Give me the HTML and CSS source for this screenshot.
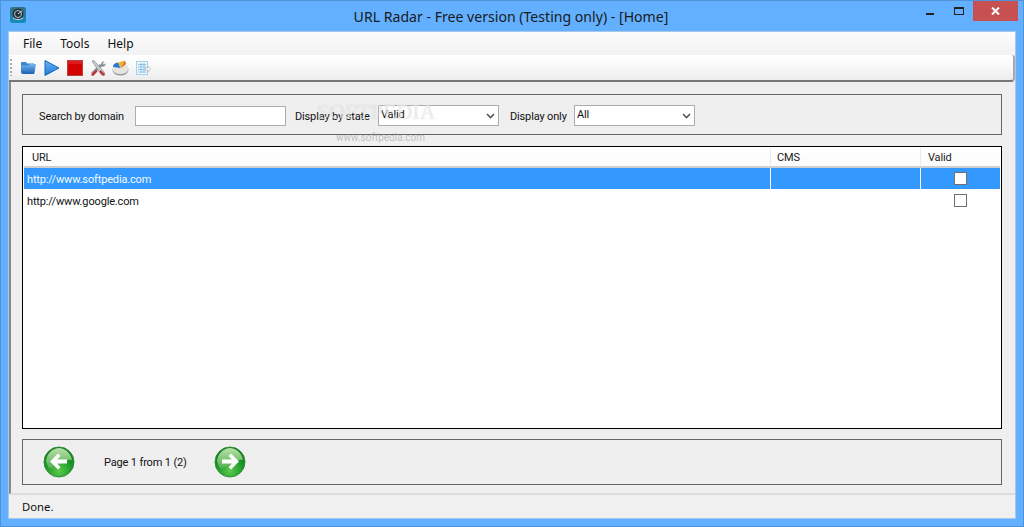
FILE: index.html
```html
<!DOCTYPE html>
<html lang="en">
<head>
<meta charset="utf-8">
<title>URL Radar</title>
<link rel="stylesheet" href="styles.css">
</head>
<body>
<div class="window">
  <header class="titlebar">
    <svg class="appicon" width="16" height="16" viewBox="0 0 16 16">
      <defs><linearGradient id="ai" x1="0" y1="0" x2="0" y2="1"><stop offset="0" stop-color="#3a6f80"/><stop offset="1" stop-color="#0f8fc0"/></linearGradient></defs>
      <rect width="16" height="16" rx="2.5" fill="url(#ai)"/>
      <circle cx="8" cy="7" r="5.5" fill="#22303a"/>
      <circle cx="8" cy="7" r="3.5" fill="none" stroke="#b8c4cc" stroke-width="1"/>
      <path d="M8 7l4-3M3 11c3 2 7 2 10 0" fill="none" stroke="#d8e0e4" stroke-width="1"/>
    </svg>
    <div class="title">URL Radar - Free version (Testing only) - [Home]</div>
    <div class="caption">
      <div class="cap-btn"><span class="min"></span></div>
      <div class="cap-btn"><span class="max"></span></div>
      <div class="cap-close">
        <svg width="9" height="8" viewBox="0 0 9 8"><path d="M1 .5l7 7M8 .5l-7 7" stroke="#fff" stroke-width="2"/></svg>
      </div>
    </div>
  </header>
  <div class="client">
    <nav class="menubar"><span>File</span><span>Tools</span><span>Help</span></nav>
    <div class="toolbar">
      <span class="grip"></span>
      <svg class="tool" width="17" height="16" viewBox="0 0 17 16">
        <defs><linearGradient id="fo" x1="0" y1="0" x2="0" y2="1"><stop offset="0" stop-color="#74b8f0"/><stop offset="1" stop-color="#1c5fb4"/></linearGradient></defs>
        <path d="M1 3q0-1 1-1h4l1 1.500h7v3H1z" fill="#3f85cf"/>
        <path d="M1 5.500h7l2-1.500h6L14.500 13q-.2 1-1 1H3q-2 0-2-2z" fill="url(#fo)"/>
      </svg>
      <svg class="tool" width="16" height="16" viewBox="0 0 16 16">
        <defs><linearGradient id="pl" x1="0" y1="0" x2="0" y2="1"><stop offset="0" stop-color="#66b6f4"/><stop offset="1" stop-color="#1e78d8"/></linearGradient></defs>
        <path d="M1 .5L15 8 1 15.500z" fill="url(#pl)" stroke="#1a64b8" stroke-width="1"/>
      </svg>
      <svg class="tool" width="16" height="16" viewBox="0 0 16 16">
        <rect x=".5" y=".5" width="15" height="15" fill="#d40000" stroke="#b84040"/>
        <rect x="1" y="1" width="14" height="3" fill="#e01a1a"/>
      </svg>
      <svg class="tool" width="16" height="16" viewBox="0 0 16 16">
        <path d="M2 14L11 5" stroke="#8a8f94" stroke-width="3"/>
        <path d="M10 6l2-4 2.500-1-1.500 2.500 1 1L16 3l-1 3-3 1z" fill="#8f959a"/>
        <path d="M2 1l2-.5L14 12l1 3-2 .5-2-1z" fill="#c8ccd0" stroke="#777" stroke-width=".6"/>
        <path d="M1 15l5-5 1.500 1.500-4.500 4.500z" fill="#c8242a"/>
        <path d="M10 11l4 4" stroke="#c8242a" stroke-width="2"/>
      </svg>
      <svg class="tool tool-pie" width="17" height="16" viewBox="0 0 17 16">
        <ellipse cx="8.500" cy="10" rx="8" ry="5.500" fill="#9a9a98"/>
        <ellipse cx="8.500" cy="8.500" rx="8" ry="5.500" fill="#e6e4e0"/>
        <path d="M1 7Q1 3 6 2.500L8.500 8z" fill="#2a78d0"/>
        <path d="M6 2.500L13 .5 9 8z" fill="#f0b428"/>
        <path d="M13 .5l1 3.500-5 4z" fill="#e06a20"/>
      </svg>
      <svg class="tool" width="16" height="16" viewBox="0 0 16 16">
        <rect x="1.500" y="1.500" width="11" height="13" fill="#eef6fb" stroke="#a8d0e6"/>
        <path d="M3 4.500h8M3 7h8M3 9.500h8M3 12h8M6 3v10M9 3v10" stroke="#8cc4e4" stroke-width="1"/>
        <path d="M10 8h3V6l3 3-3 3v-2h-3z" fill="#fafafa" stroke="#b5b5b5" stroke-width=".7"/>
      </svg>
    </div>
    <main class="content">
      <section class="panel filters">
        <label class="lbl lbl-domain">Search by domain</label>
        <div class="input"></div>
        <label class="lbl lbl-state">Display by state</label>
        <div class="select sel-state"><span>Valid</span><svg width="9" height="6" viewBox="0 0 9 6"><path d="M1 1l3.500 3.500L8 1" fill="none" stroke="#555" stroke-width="1.600"/></svg></div>
        <label class="lbl lbl-only">Display only</label>
        <div class="select sel-only"><span>All</span><svg width="9" height="6" viewBox="0 0 9 6"><path d="M1 1l3.500 3.500L8 1" fill="none" stroke="#555" stroke-width="1.600"/></svg></div>
      </section>
      <section class="grid">
        <div class="row head">
          <div class="c-url">URL</div><div class="c-cms">CMS</div><div class="c-valid">Valid</div>
        </div>
        <div class="row item selected">
          <div class="c-url">http://www.softpedia.com</div><div class="c-cms"></div><div class="c-valid"><span class="check"></span></div>
        </div>
        <div class="row item">
          <div class="c-url">http://www.google.com</div><div class="c-cms"></div><div class="c-valid"><span class="check"></span></div>
        </div>
      </section>
      <section class="panel pager">
        <svg class="nav" width="32" height="32" viewBox="0 0 32 32">
          <defs>
            <radialGradient id="gb" cx=".5" cy=".8" r=".7"><stop offset="0" stop-color="#5ecb4e"/><stop offset=".6" stop-color="#1c9a2a"/><stop offset="1" stop-color="#0c7a1c"/></radialGradient>
            <linearGradient id="gs" x1="0" y1="0" x2="0" y2="1"><stop offset="0" stop-color="#b8e0a8"/><stop offset="1" stop-color="#52b050"/></linearGradient>
          </defs>
          <circle cx="16" cy="16" r="15" fill="url(#gb)" stroke="#2f8f38"/>
          <path d="M3 15C4 7 10 2 16 2s12 5 13 12C22 12 12 24 6 22q-2-3-3-7z" fill="url(#gs)"/>
          <path d="M15 7.500L7 15.500l8 8 2.500-2.500-3.500-3.500h10v-4H14l3.500-3.500z" fill="#fff"/>
        </svg>
        <span class="page">Page 1 from 1 (2)</span>
        <svg class="nav" width="32" height="32" viewBox="0 0 32 32">
          <circle cx="16" cy="16" r="15" fill="url(#gb)" stroke="#2f8f38"/>
          <path d="M3 15C4 7 10 2 16 2s12 5 13 12C22 12 12 24 6 22q-2-3-3-7z" fill="url(#gs)"/>
          <path d="M17 7.500L25 15.500l-8 8-2.500-2.500 3.500-3.500H8v-4h10l-3.500-3.500z" fill="#fff"/>
        </svg>
      </section>
    </main>
    <footer class="status">Done.</footer>
  </div>
  <div class="wm wm-big">SOFTPEDIA</div>
  <div class="wm wm-small">www.softpedia.com</div>
</div>
</body>
</html>
```

FILE: styles.css
```css
* { box-sizing: border-box; }
html, body { margin: 0; height: 100%; }
body { overflow: hidden; font-family: Roboto, "Liberation Sans", sans-serif; font-size: 11px; letter-spacing: -.15px; color: #111; }
.window {
  position: relative;
  width: 1024px; height: 527px;
  background: #62b0ff;
  border: 1px solid #4f94d8;
  display: flex; flex-direction: column;
}
.titlebar { height: 30px; flex: none; position: relative; display: flex; align-items: flex-start; }
.appicon { margin: 6px 0 0 9px; }
.title {
  position: absolute; left: 0; right: 0; top: 6px;
  font-family: "Noto Sans", sans-serif; letter-spacing: 0;
  text-align: center; font-size: 14.100px; line-height: 20px; color: #1a1a1a;
  padding-right: 2px;
}
.caption { margin-left: auto; display: flex; margin-right: 6px; }
.cap-btn { height: 20px; display: flex; justify-content: center; }
.cap-btn:nth-child(1) { width: 30px; }
.cap-btn:nth-child(2) { width: 28px; }
.min { width: 8px; height: 2px; background: #222; margin-top: 12px; }
.max { width: 10px; height: 8px; border: 1px solid #222; border-top-width: 2px; margin-top: 6px; }
.cap-close { width: 45px; height: 20px; background: #c75050; display: flex; align-items: center; justify-content: center; margin-right: -1px; }
.client {
  flex: 1; margin: 0 7px 7px;
  background: #f0f0f0;
  border: 1px solid #a6c8ea;
  display: flex; flex-direction: column; min-height: 0;
}
.menubar {
  height: 23px; flex: none; display: flex; gap: 18px; align-items: center;
  padding: 0 0 0 14px; color: #111; font-family: "Noto Sans", sans-serif; font-size: 12px; letter-spacing: 0;
  background: linear-gradient(#fcfcfc, #f2f2f2);
}
.toolbar {
  height: 27px; flex: none; display: flex; align-items: center; gap: 7px;
  padding: 0 0 0 1px;
  background: linear-gradient(#ffffff 0%, #f7f7f7 55%, #ececec 100%);
  border-bottom: 2px solid #777;
  border-right: 2px solid #aaa;
  border-radius: 0 3px 4px 0;
}
.grip { width: 2px; height: 17px; margin-right: 1px; background: repeating-linear-gradient(#a8a8a8 0 2px, transparent 2px 4px); }
.tool { flex: none; }
.tool-pie { margin-left: -1px; margin-right: -1px; }
.content {
  flex: 1; min-height: 0; display: flex; flex-direction: column;
  padding: 12px 13px 8px 11px; gap: 10px;
  background: #efefef;
  border-left: 2px solid #8a8a8a;
  border-bottom: 1px solid #dcdcdc;
}
.panel { border: 1px solid #666; flex: none; display: flex; align-items: center; }
.filters { height: 41px; margin-bottom: 1px; padding-left: 16px; padding-top: 2px; }
.lbl { white-space: nowrap; position: relative; top: 1px; }
.lbl-domain { width: 96px; }
.input { width: 151px; height: 20px; background: #fff; border: 1px solid #abadb3; }
.lbl-state { margin-left: 9px; width: 83px; }
.select {
  height: 21px; background: #fff; border: 1px solid #abadb3;
  display: flex; justify-content: space-between; align-items: center;
  padding: 0 3px 0 2px;
}
.select span { margin-top: -3px; }
.sel-state { width: 121px; }
.lbl-only { margin-left: 11px; width: 64px; }
.sel-only { width: 121px; }
.grid { flex: 1; min-height: 0; background: #fff; border: 1px solid #000; padding: 1px; }
.row { display: grid; grid-template-columns: 747px 150px 1fr; }
.head { height: 20px; background: linear-gradient(#fff, #fbfbfb); border-bottom: 2px solid #cfcfcf; color: #222; }
.head > div { padding: 1px 0 0 6px; line-height: 17px; border-right: 1px solid #e3ebf6; }
.head > .c-url { padding-left: 8px; }
.head > .c-valid { padding-left: 7px; align-items: flex-start; }
.item { height: 22px; grid-template-rows: 21px; border-bottom: 1px solid #fff; }
.item .c-url { padding: 2px 0 0 3px; line-height: 19px; }
.item .c-url, .item .c-cms { border-right: 1px solid transparent; }
.selected { background: #3399ff; color: #f4f9ff; }
.selected .c-url, .selected .c-cms { border-right-color: #fff; }
.c-valid { display: flex; align-items: center; justify-content: center; }
.head .c-valid { justify-content: flex-start; border-right: 0; }
.check { display: block; width: 13px; height: 13px; background: #fff; border: 1px solid #707070; }
.pager { height: 46px; padding-left: 20px; }
.page { margin: 0 29px; width: 81px; white-space: nowrap; }
.status { height: 24px; flex: none; border-top: 1px solid #dcdcdc; padding: 0 0 0 13px; line-height: 23px; font-family: "Noto Sans", sans-serif; letter-spacing: 0; font-size: 11.300px; background: #f0f0f0; }
.wm { position: absolute; pointer-events: none; white-space: nowrap; }
.wm-big { left: 316px; top: 98px; font-family: "Liberation Serif", serif; font-size: 22px; letter-spacing: 0; color: rgba(255,255,255,.6); text-shadow: 0 0 1px rgba(120,120,120,.35); }
.wm-small { left: 335px; top: 131px; font-size: 10px; letter-spacing: 0; color: rgba(150,150,150,.55); }
```
